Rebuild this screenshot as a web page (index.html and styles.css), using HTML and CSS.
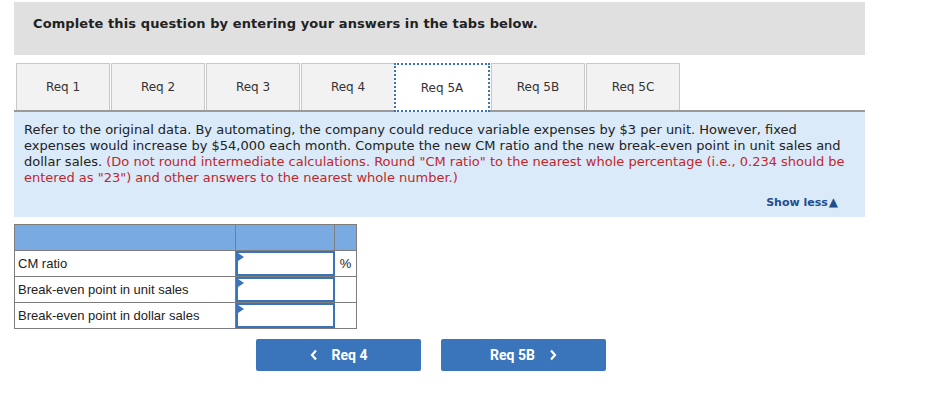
FILE: index.html
```html
<!DOCTYPE html>
<html lang="en">
<head>
  <meta charset="UTF-8">
  <title>Req 5A</title>
  <link rel="stylesheet" href="styles.css">
</head>
<body>
  <div class="page">
    <div class="intro">Complete this question by entering your answers in the tabs below.</div>

    <div class="tabs">
      <button class="tab">Req 1</button>
      <button class="tab">Req 2</button>
      <button class="tab">Req 3</button>
      <button class="tab">Req 4</button>
      <button class="tab active">Req 5A</button>
      <button class="tab">Req 5B</button>
      <button class="tab">Req 5C</button>
    </div>

    <div class="question">
      <p>Refer to the original data. By automating, the company could reduce variable expenses by $3 per unit. However, fixed expenses would increase by $54,000 each month. Compute the new CM ratio and the new break-even point in unit sales and dollar sales. <span class="note">(Do not round intermediate calculations. Round "CM ratio" to the nearest whole percentage (i.e., 0.234 should be entered as "23") and other answers to the nearest whole number.)</span></p>
      <div class="show-less">Show less<span class="arrow">&#9650;</span></div>
    </div>

    <table class="answers">
      <tr class="head">
        <td class="label"></td>
        <td class="entry"></td>
        <td class="unit"></td>
      </tr>
      <tr>
        <td class="label">CM ratio</td>
        <td class="entry"><div class="box"></div></td>
        <td class="unit">%</td>
      </tr>
      <tr>
        <td class="label">Break-even point in unit sales</td>
        <td class="entry"><div class="box"></div></td>
        <td class="unit"></td>
      </tr>
      <tr>
        <td class="label">Break-even point in dollar sales</td>
        <td class="entry"><div class="box"></div></td>
        <td class="unit"></td>
      </tr>
    </table>

    <div class="nav">
      <button class="nav-btn">
        <svg class="chev" viewBox="0 0 8 12"><path d="M6 1.5L2 6l4 4.5" fill="none" stroke="currentColor" stroke-width="2.2"/></svg>
        Req 4
      </button>
      <button class="nav-btn">
        Req 5B
        <svg class="chev" viewBox="0 0 8 12"><path d="M2 1.5L6 6l-4 4.5" fill="none" stroke="currentColor" stroke-width="2.2"/></svg>
      </button>
    </div>
  </div>
</body>
</html>
```

FILE: styles.css
```css
body {
  margin: 0;
  background: #fff;
  font-family: 'DejaVu Sans', Verdana, sans-serif;
  color: #222;
}
.page {
  padding: 2px 0 0 14px;
  width: 851px;
}
.intro {
  background: #e0e0e0;
  height: 53px;
  box-sizing: border-box;
  padding: 14px 0 0 19px;
  font-size: 13px;
  font-weight: bold;
  letter-spacing: 0.1px;
  color: #222;
}
.tabs {
  display: flex;
  gap: 1px;
  margin-top: 8px;
  padding-left: 2px;
  border-bottom: 2px solid #9a9a9a;
  height: 47px;
}
.tab {
  width: 94px;
  height: 47px;
  background: #f2f2f2;
  border: 1px solid #c8c8c8;
  border-bottom: none;
  font-family: 'DejaVu Sans', Verdana, sans-serif;
  font-size: 12px;
  color: #333;
  padding: 0;
  margin: 0;
}
.tab.active {
  background: #fff;
  border: 2px dotted #3b73b9;
  width: 96px;
  height: 49px;
  margin-left: -2px;
  padding-top: 1px;
  position: relative;
  z-index: 1;
}
.question {
  background: #daeaf8;
  padding: 10px 12px 7px 10px;
}
.question p {
  margin: 0;
  font-size: 13px;
  line-height: 16px;
  color: #222;
}
.note {
  color: #c0272d;
}
.show-less {
  text-align: right;
  margin-top: 9px;
  padding-right: 15px;
  font-size: 11px;
  line-height: 15px;
  font-weight: bold;
  color: #1f4e8d;
}
.arrow {
  font-size: 12px;
  margin-left: 1px;
}
.answers {
  margin-top: 7px;
  border-collapse: collapse;
  font-family: 'Liberation Sans', Arial, sans-serif;
  font-size: 13px;
  color: #222;
}
.answers td {
  border: 1px solid #7d7d7d;
  height: 25px;
  padding: 0;
}
.answers .head td {
  background: #79abe2;
}
.answers .label {
  width: 217px;
  padding-left: 3px;
}
.answers .entry {
  width: 98px;
}
.answers .unit {
  width: 21px;
  text-align: center;
}
.box {
  position: relative;
  height: 21px;
  border: 2px solid #3b73b9;
  margin-right: -1px;
}
.box::before {
  content: "";
  position: absolute;
  left: 0;
  top: 0;
  border-left: 6px solid #3b73b9;
  border-top: 4px solid transparent;
  border-bottom: 4px solid transparent;
}
.nav {
  display: flex;
  gap: 20px;
  margin-top: 10px;
  padding-left: 242px;
}
.nav-btn {
  width: 165px;
  height: 32px;
  background: #3a75bb;
  color: #fff;
  border: none;
  border-radius: 2px;
  font-family: Roboto, sans-serif;
  font-weight: bold;
  font-size: 14px;
  display: flex;
  align-items: center;
  justify-content: center;
  gap: 14px;
}
.chev {
  width: 8px;
  height: 12px;
}
```
